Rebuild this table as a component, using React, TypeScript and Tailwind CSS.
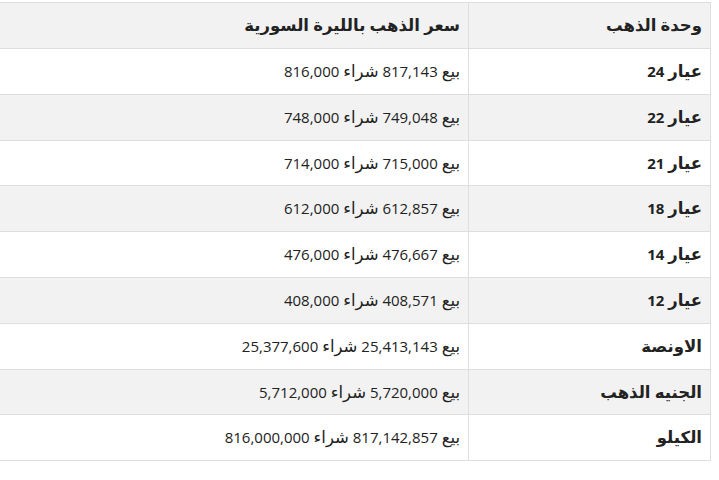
import React from "react";

const rows: [string, string][] = [
  ["عيار 24", "بيع 817,143 شراء 816,000"],
  ["عيار 22", "بيع 749,048 شراء 748,000"],
  ["عيار 21", "بيع 715,000 شراء 714,000"],
  ["عيار 18", "بيع 612,857 شراء 612,000"],
  ["عيار 14", "بيع 476,667 شراء 476,000"],
  ["عيار 12", "بيع 408,571 شراء 408,000"],
  ["الاونصة", "بيع 25,413,143 شراء 25,377,600"],
  ["الجنيه الذهب", "بيع 5,720,000 شراء 5,712,000"],
  ["الكيلو", "بيع 817,142,857 شراء 816,000,000"],
];

function T({ s }: { s: string }) {
  const parts = s.split(/([\u0600-\u06FF]+(?: [\u0600-\u06FF]+)*)/);
  return (
    <>
      {parts.map((p, i) =>
        /[\u0600-\u06FF]/.test(p) ? (
          <span key={i} className="text-[16.5px]">
            {p}
          </span>
        ) : (
          <React.Fragment key={i}>{p}</React.Fragment>
        )
      )}
    </>
  );
}

export default function App() {
  return (
    <div
      dir="rtl"
      className="w-[719px] h-[480px] bg-white overflow-hidden pr-[8px] pt-[2px] text-[#222] text-[15px]"
      style={{ fontFamily: '"Open Sans", "Noto Sans", "DejaVu Sans", sans-serif' }}
    >
      <table className="w-[720px] border-collapse">
        <thead>
          <tr className="bg-[#f2f2f2]">
            <th className="w-[242px] h-[46px] border border-[#dedede] px-2 text-right font-bold">
              <T s="وحدة الذهب" />
            </th>
            <th className="h-[46px] border border-[#dedede] px-2 text-right font-bold">
              <T s="سعر الذهب بالليرة السورية" />
            </th>
          </tr>
        </thead>
        <tbody>
          {rows.map(([a, b], i) => (
            <tr key={i} className={i % 2 === 1 ? "bg-[#f2f2f2]" : "bg-white"}>
              <td className="h-[45.8px] border border-[#dedede] px-2 text-right font-bold">
                <T s={a} />
              </td>
              <td className="h-[45.8px] border border-[#dedede] px-2 text-right">
                <T s={b} />
              </td>
            </tr>
          ))}
        </tbody>
      </table>
    </div>
  );
}
